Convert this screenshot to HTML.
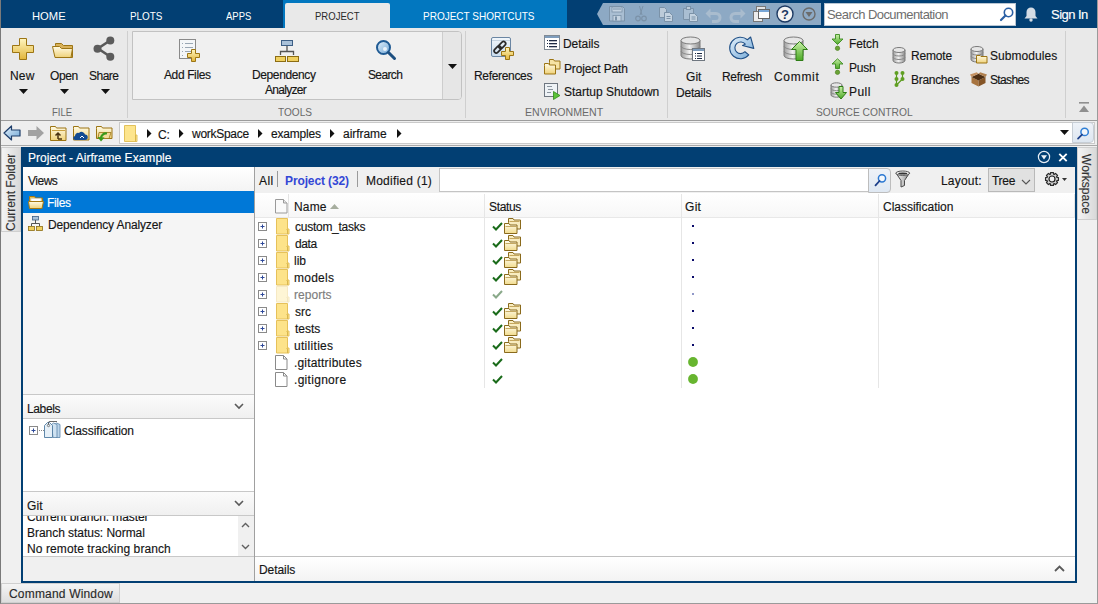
<!DOCTYPE html>
<html><head><meta charset="utf-8">
<style>
*{box-sizing:border-box;margin:0;padding:0}
html,body{width:1098px;height:604px;overflow:hidden;background:#f0f0f0;font-family:"Liberation Sans",sans-serif;font-size:12px;color:#222}
.a{position:absolute}
.t{position:absolute;white-space:nowrap;line-height:14px;-webkit-text-stroke:0.15px currentColor}
svg{position:absolute;overflow:visible}
</style></head><body>
<!-- outer frame -->
<div class="a" style="left:0;top:0;width:1098px;height:604px;border-left:1px solid #7a7a7a;border-right:1px solid #9a9a9a;border-bottom:1px solid #9a9a9a;z-index:50;pointer-events:none"></div>

<!-- ===== TOP BAR ===== -->
<div class="a" style="left:0;top:0;width:1098px;height:28px;background:#023f73"></div>
<div class="a" style="left:283px;top:0;width:284px;height:28px;background:#0277bf"></div>
<div class="a" style="left:285px;top:3px;width:105px;height:26px;background:#e9e9e9;border-radius:2px 2px 0 0"></div>

<!-- quick access -->
<svg style="left:596px;top:3px" width="226" height="22"><path d="M7 0H225V22H7L1 11Z" fill="#8da9c4"/></svg>

<!-- search doc -->
<div class="a" style="left:824px;top:3px;width:192px;height:23px;background:#fff;border:1px solid #b9c6d3"></div>

<!-- ===== TOOLSTRIP ===== -->
<div class="a" style="left:0;top:28px;width:1098px;height:92px;background:#e9e9e9"></div>
<div class="a" style="left:0;top:120px;width:1098px;height:1px;background:#9c9c9c"></div>
<!-- separators -->
<div class="a" style="left:127px;top:31px;width:1px;height:87px;background:#cfcfcf"></div>
<div class="a" style="left:465px;top:31px;width:1px;height:87px;background:#cfcfcf"></div>
<div class="a" style="left:667px;top:31px;width:1px;height:87px;background:#cfcfcf"></div>
<div class="a" style="left:1065px;top:31px;width:1px;height:87px;background:#cfcfcf"></div>
<!-- tools box -->
<div class="a" style="left:132px;top:31px;width:330px;height:69px;background:#f0f0f0;border:1px solid #c2c2c2;border-radius:0 4px 4px 0"></div>
<div class="a" style="left:442px;top:32px;width:19px;height:67px;background:#e6e6e6;border-left:1px solid #cdcdcd;border-radius:0 3px 3px 0"></div>

<!-- labels -->

<!-- shared defs -->
<svg width="0" height="0" style="position:absolute">
<defs>
<linearGradient id="gold" x1="0" y1="0" x2="0" y2="1"><stop offset="0" stop-color="#fff6c0"/><stop offset="1" stop-color="#e2b53a"/></linearGradient>
<linearGradient id="fold" x1="0" y1="0" x2="0" y2="1"><stop offset="0" stop-color="#fffbe6"/><stop offset="1" stop-color="#efd27a"/></linearGradient>
<linearGradient id="db" x1="0" y1="0" x2="1" y2="0"><stop offset="0" stop-color="#9c9c9c"/><stop offset=".45" stop-color="#f2f2f2"/><stop offset="1" stop-color="#8a8a8a"/></linearGradient>
<linearGradient id="fold2" x1="0" y1="0" x2="0" y2="1"><stop offset="0" stop-color="#fffdf0"/><stop offset="1" stop-color="#f2dc8e"/></linearGradient>
<linearGradient id="grn" x1="0" y1="0" x2="0" y2="1"><stop offset="0" stop-color="#c9f0a8"/><stop offset="1" stop-color="#4aa824"/></linearGradient>
<linearGradient id="blu2" x1="0" y1="0" x2="0" y2="1"><stop offset="0" stop-color="#f2f7fb"/><stop offset="1" stop-color="#c9dced"/></linearGradient>
<linearGradient id="blu" x1="0" y1="0" x2="1" y2="1"><stop offset="0" stop-color="#e6f2fb"/><stop offset="1" stop-color="#6fa6d6"/></linearGradient>
</defs></svg>

<!-- New -->
<svg style="left:12px;top:38px" width="22" height="22"><path d="M7.5 .5h7v7h7v7h-7v7h-7v-7h-7v-7h7z" fill="url(#gold)" stroke="#9c7514"/></svg>
<!-- Open -->
<svg style="left:52px;top:42px" width="23" height="17"><path d="M3.5 3.5V1.5h6l2 2h9v12h-17z" fill="#d9b25a" stroke="#9c7514"/><path d="M.5 4.5h7l2 2h11l-1.5 9h-16z" fill="url(#fold)" stroke="#9c7514"/></svg>
<!-- Share -->
<svg style="left:93px;top:36px" width="22" height="26"><path d="M17 4.5L5 12.5L17 20.5" fill="none" stroke="#5a5a5a" stroke-width="2.6"/><circle cx="17.3" cy="4.5" r="4" fill="#5c5c5c"/><circle cx="4.5" cy="12.8" r="4" fill="#5c5c5c"/><circle cx="17.3" cy="20.8" r="4" fill="#5c5c5c"/></svg>
<!-- dropdown triangles -->
<svg style="left:19px;top:89px" width="9" height="5"><path d="M0 0h9L4.5 5z" fill="#111"/></svg>
<svg style="left:60px;top:89px" width="9" height="5"><path d="M0 0h9L4.5 5z" fill="#111"/></svg>
<svg style="left:101px;top:89px" width="9" height="5"><path d="M0 0h9L4.5 5z" fill="#111"/></svg>
<svg style="left:448px;top:64px" width="9" height="5"><path d="M0 0h9L4.5 5z" fill="#111"/></svg>

<!-- Add Files -->
<svg style="left:179px;top:39px" width="22" height="23"><rect x=".5" y=".5" width="16" height="19" fill="#f4f6f8" stroke="#8a8a8a"/><g fill="#9aa7b4"><rect x="3" y="4" width="1" height="1"/><rect x="3" y="8" width="1" height="1"/><rect x="3" y="12" width="1" height="1"/><rect x="3" y="16" width="1" height="1"/><rect x="6" y="4" width="8" height="1"/><rect x="6" y="8" width="8" height="1"/><rect x="6" y="12" width="8" height="1"/></g><path d="M12.5 10.5h4v4h4v4h-4v4h-4v-4h-4v-4h4z" fill="url(#gold)" stroke="#9c7514"/></svg>
<!-- Dependency Analyzer -->
<svg style="left:275px;top:40px" width="24" height="22"><rect x="6.5" y=".5" width="11" height="5" fill="#a9c1d9" stroke="#3d5f86"/><path d="M12 6v5M5.5 15v-3.5h13V15" fill="none" stroke="#555" stroke-width="1.3"/><rect x=".5" y="16.5" width="10" height="5" fill="#f0d060" stroke="#8c6d14"/><rect x="12.5" y="16.5" width="11" height="5" fill="#f0d060" stroke="#8c6d14"/></svg>
<!-- Search -->
<svg style="left:375px;top:39px" width="22" height="22"><circle cx="8.5" cy="8.5" r="6.5" fill="url(#blu)" stroke="#1f5a93" stroke-width="2"/><path d="M13.5 13.5L19.5 19.5" stroke="#1d4f80" stroke-width="3" stroke-linecap="round"/><circle cx="10" cy="10" r="2" fill="#fff" opacity=".8"/></svg>

<!-- References -->
<svg style="left:490px;top:36px" width="26" height="26"><rect x="1.5" y="1.5" width="19" height="19" rx="1.5" fill="url(#blu2)" stroke="#6b86a3"/><path d="M2 4.5h18" stroke="#c5d3e0"/><g transform="rotate(-45 10 11)" fill="none" stroke="#2a2a2a" stroke-width="1.7"><rect x="2.5" y="9" width="8" height="4.2" rx="2.1"/><rect x="9" y="9" width="8" height="4.2" rx="2.1"/></g><path d="M15.5 11.5h4v4h4v4h-4v4h-4v-4h-4v-4h4z" fill="url(#gold)" stroke="#9c7514"/></svg>
<!-- Details small -->
<svg style="left:544px;top:35px" width="16" height="15"><rect x=".5" y=".5" width="15" height="14" fill="#fff" stroke="#808a94"/><rect x="1" y="1" width="14" height="2" fill="#7d9cbc"/><g fill="#1d2a44"><rect x="3" y="5" width="1" height="1"/><rect x="3" y="8" width="1" height="1"/><rect x="3" y="11" width="1" height="1"/><rect x="5" y="5" width="8" height="1.3"/><rect x="5" y="8" width="8" height="1.3"/><rect x="5" y="11" width="8" height="1.3"/></g></svg>
<!-- Project Path -->
<svg style="left:544px;top:59px" width="17" height="16"><path d="M5.5 3.5v-3h4l1 1.5h5.5v8h-10.5z" fill="#f6e3a4" stroke="#9c7514"/><path d="M.5 6.5v-2h4l1 1.5h6v9h-11z" fill="url(#fold)" stroke="#9c7514"/></svg>
<!-- Startup Shutdown -->
<svg style="left:544px;top:83px" width="17" height="17"><rect x=".5" y=".5" width="13" height="13" fill="#eef2f6" stroke="#6e7680"/><g stroke="#8a949e"><path d="M3 3.5h5M4 6.5h5M3 9.5h4"/></g><path d="M9.5 8.5v8l6.5-4z" fill="#5cc23a" stroke="#2e8c18" stroke-width=".8"/></svg>

<!-- Git Details -->
<svg style="left:680px;top:36px" width="27" height="26"><path d="M1 4.5v15a9.5 3.5 0 0 0 19 0v-15" fill="url(#db)" stroke="#7a7a7a"/><ellipse cx="10.5" cy="4.5" rx="9.5" ry="3.5" fill="#e6e6e6" stroke="#7a7a7a"/><path d="M1 10a9.5 3.5 0 0 0 19 0M1 15a9.5 3.5 0 0 0 19 0" fill="none" stroke="#888"/><rect x="12.5" y="12.5" width="12" height="12" fill="#fff" stroke="#6f7780"/><rect x="13" y="13" width="11" height="2" fill="#7d9cbc"/><g fill="#1d2a44"><rect x="15" y="17" width="1" height="1"/><rect x="15" y="19.5" width="1" height="1"/><rect x="15" y="22" width="1" height="1"/><rect x="17" y="17" width="5" height="1"/><rect x="17" y="19.5" width="5" height="1"/><rect x="17" y="22" width="5" height="1"/></g></svg>
<!-- Refresh -->
<svg style="left:728px;top:35px" width="28" height="26"><path d="M20.77 19.94A10.8 10.8 0 1 1 19.44 4.73L22.6 2 25.8 13.4 14.5 10.5 17.25 9.2A5.8 5.8 0 1 0 16.94 16.73z" fill="url(#blu)" stroke="#1f4f86" stroke-width="1.1" stroke-linejoin="round"/></svg>
<!-- Commit -->
<svg style="left:783px;top:36px" width="26" height="26"><path d="M1 4.5v15a9.5 3.5 0 0 0 19 0v-15" fill="url(#db)" stroke="#7a7a7a"/><ellipse cx="10.5" cy="4.5" rx="9.5" ry="3.5" fill="#e6e6e6" stroke="#7a7a7a"/><path d="M1 10a9.5 3.5 0 0 0 19 0M1 15a9.5 3.5 0 0 0 19 0" fill="none" stroke="#888"/><path d="M16.5 5.5l8 8h-4.5v11h-7v-11h-4.5z" fill="url(#grn)" stroke="#2e7d16"/></svg>
<!-- Fetch -->
<svg style="left:831px;top:34px" width="13" height="18"><path d="M4.5 .5h4v4.5h3.5L6.5 10.5 1 5h3.5z" fill="url(#grn)" stroke="#3b8a1e" stroke-width=".9"/><circle cx="6.5" cy="14.3" r="2.2" fill="#6aa336" stroke="#4a7d1c" stroke-width=".6"/></svg>
<!-- Push -->
<svg style="left:831px;top:58px" width="13" height="18"><path d="M4.5 10.5h4V6h3.5L6.5 .8 1 6h3.5z" fill="url(#grn)" stroke="#3b8a1e" stroke-width=".9"/><circle cx="6.5" cy="14.3" r="2.2" fill="#6aa336" stroke="#4a7d1c" stroke-width=".6"/></svg>
<!-- Pull -->
<svg style="left:830px;top:82px" width="18" height="18"><path d="M1 3v10a5.5 2.2 0 0 0 11 0v-10" fill="url(#db)" stroke="#7a7a7a"/><ellipse cx="6.5" cy="3" rx="5.5" ry="2.2" fill="#e6e6e6" stroke="#7a7a7a"/><path d="M1 6.5a5.5 2.2 0 0 0 11 0M1 10a5.5 2.2 0 0 0 11 0" fill="none" stroke="#888"/><path d="M9 4.5h4v6h3.5l-5.5 6.5-5.5-6.5H9z" fill="url(#grn)" stroke="#2e7d16"/></svg>
<!-- Remote -->
<svg style="left:892px;top:47px" width="14" height="17"><path d="M1 3v10.5a6 2.5 0 0 0 12 0V3" fill="url(#db)" stroke="#7a7a7a"/><ellipse cx="7" cy="3" rx="6" ry="2.5" fill="#e6e6e6" stroke="#7a7a7a"/><path d="M1 6.5a6 2.5 0 0 0 12 0M1 10a6 2.5 0 0 0 12 0" fill="none" stroke="#888"/></svg>
<!-- Branches -->
<svg style="left:893px;top:70px" width="13" height="18"><path d="M3.5 3v12.5M9.5 3v6L3.5 15" fill="none" stroke="#5a9a1e" stroke-width="1.2"/><g fill="#5f9f22"><circle cx="3.5" cy="3" r="2"/><circle cx="9.5" cy="3" r="2"/><circle cx="3.5" cy="9" r="2"/><circle cx="9.5" cy="9" r="2"/><circle cx="3.5" cy="15" r="2"/></g></svg>
<!-- Submodules -->
<svg style="left:970px;top:46px" width="18" height="18"><path d="M1 3v10.5a6 2.5 0 0 0 12 0V3" fill="url(#db)" stroke="#7a7a7a"/><ellipse cx="7" cy="3" rx="6" ry="2.5" fill="#e6e6e6" stroke="#7a7a7a"/><path d="M1 6.5a6 2.5 0 0 0 12 0M1 10a6 2.5 0 0 0 12 0" fill="none" stroke="#888"/><path d="M6.5 9.5h3.5l1 1h6v6.5h-10.5z" fill="url(#fold)" stroke="#9c7514"/></svg>
<!-- Stashes -->
<svg style="left:970px;top:72px" width="18" height="15"><path d="M1.5 5L8.5 8.5V14.5L1.5 11z" fill="#a8743f"/><path d="M8.5 8.5L15.5 5V11L8.5 14.5z" fill="#855526"/><path d="M8.5 1.8L15.5 5 8.5 8.5 1.5 5z" fill="#4d2e12"/><path d="M1.5 5L0 2.6 6.8 .2 8.5 1.8z" fill="#c49262"/><path d="M15.5 5L17 2.6 10.2 .2 8.5 1.8z" fill="#b0804e"/></svg>
<!-- collapse toolstrip -->
<svg style="left:1079px;top:102px" width="11" height="11"><rect x="0" y="0" width="10" height="1.6" fill="#8f8f8f"/><path d="M5 3.5L10 10H0z" fill="#8f8f8f"/></svg>

<!-- ===== ADDRESS BAR ===== -->
<div class="a" style="left:0;top:121px;width:1098px;height:24px;background:#eeeeee"></div>
<div class="a" style="left:0;top:145px;width:1098px;height:1px;background:#a9a9a9"></div>
<div class="a" style="left:119px;top:122px;width:976px;height:22px;background:#fff;border:1px solid #cacaca"></div>

<!-- quick access icons -->
<svg style="left:609px;top:6px" width="17" height="16"><path d="M.5 .5h13l2 2v12.5h-15z" fill="#a9bed2" stroke="#7b92a8"/><rect x="3" y="1" width="10" height="5" fill="#c4d3e1" stroke="#7b92a8" stroke-width=".8"/><path d="M4 3h8" stroke="#7b92a8"/><rect x="4" y="9.5" width="8" height="5.5" fill="#c4d3e1" stroke="#7b92a8" stroke-width=".8"/><rect x="6" y="10.5" width="2" height="4" fill="#7b92a8"/></svg>
<svg style="left:635px;top:6px" width="12" height="16"><path d="M4.5 0L7 9M8 0L5 9" stroke="#7b92a8" stroke-width="1"/><circle cx="3" cy="12.5" r="2.3" fill="none" stroke="#7b92a8" stroke-width="1.2"/><circle cx="9" cy="12.5" r="2.3" fill="none" stroke="#7b92a8" stroke-width="1.2"/></svg>
<svg style="left:659px;top:7px" width="14" height="15"><path d="M.5 .5h5l2 2v8h-7z" fill="#bccbd9" stroke="#7b92a8"/><path d="M5.5 5.5h5l3 3v6h-8z" fill="#c4d3e1" stroke="#7b92a8"/><path d="M7.5 9.5h4M7.5 11.5h4" stroke="#7b92a8"/></svg>
<svg style="left:683px;top:6px" width="15" height="16"><path d="M.5 2.5h10v11h-10z" fill="#a9bed2" stroke="#7b92a8"/><rect x="3.5" y=".5" width="4" height="3" fill="#bccbd9" stroke="#7b92a8"/><path d="M6.5 7.5h5l3 3v5h-8z" fill="#c4d3e1" stroke="#7b92a8"/><path d="M8.5 11h4M8.5 13h4" stroke="#7b92a8"/></svg>
<svg style="left:705px;top:8px" width="17" height="14"><path d="M2 5.5h9a4 4 0 0 1 0 8H7" fill="none" stroke="#a9bcce" stroke-width="3"/><path d="M.5 5.5L5.5 .5v10z" fill="#a9bcce"/><path d="M2 5.5h9a4 4 0 0 1 0 8H7" fill="none" stroke="#8aa0b6" stroke-width=".6" opacity=".0"/></svg>
<svg style="left:729px;top:8px" width="17" height="14"><path d="M15 5.5H6a4 4 0 0 0 0 8h4" fill="none" stroke="#a9bcce" stroke-width="3"/><path d="M16.5 5.5L11.5 .5v10z" fill="#a9bcce"/></svg>
<svg style="left:753px;top:6px" width="17" height="16"><rect x="3.5" y=".5" width="9" height="10" fill="#e3e3e3" stroke="#777"/><rect x=".5" y="5.5" width="9" height="10" fill="#ececec" stroke="#777"/><rect x="5.5" y="3.5" width="11" height="9" fill="#fdfdfd" stroke="#666"/><rect x="6" y="4" width="10" height="2" fill="#7aa7d6"/></svg>
<svg style="left:776px;top:5px" width="18" height="18"><circle cx="9" cy="9" r="8" fill="#f4f4f4" stroke="#1d3a63" stroke-width="1.4"/><text x="9" y="13.8" text-anchor="middle" font-family="Liberation Sans" font-weight="bold" font-size="13" fill="#1d3a63">?</text></svg>
<svg style="left:802px;top:7px" width="14" height="14"><circle cx="7" cy="7" r="6" fill="none" stroke="#6b6b6b" stroke-width="1.4"/><path d="M3.5 5h7L7 10z" fill="#6b6b6b"/></svg>
<!-- doc search mag -->
<svg style="left:1000px;top:7px" width="14" height="14"><circle cx="8.5" cy="5.5" r="4.2" fill="none" stroke="#2a5fa4" stroke-width="1.6"/><path d="M5.5 8.5L1 13" stroke="#2a5fa4" stroke-width="2.2" stroke-linecap="round"/></svg>
<!-- bell -->
<svg style="left:1024px;top:6px" width="14" height="16"><path d="M7 1.5a4.5 4.5 0 0 0-4.5 4.5v4L.5 12.5h13l-2-2.5v-4A4.5 4.5 0 0 0 7 1.5z" fill="#d4dce5"/><circle cx="7" cy="14" r="1.7" fill="#d4dce5"/></svg>

<!-- address bar icons -->
<svg style="left:3px;top:125px" width="18" height="16"><path d="M1 8L8.5 1v4h8.5v6H8.5v4z" fill="url(#blu)" stroke="#1f3e6b" stroke-width="1.2" stroke-linejoin="round"/></svg>
<svg style="left:27px;top:125px" width="18" height="16"><path d="M17 8L9.5 1v4H1v6h8.5v4z" fill="#a2a2a2"/></svg>
<svg style="left:50px;top:126px" width="17" height="15"><path d="M.5 2.5v-2h5l1 1.5h9.5v12.5h-15.5z" fill="url(#fold)" stroke="#9c7514"/><path d="M2 4.5h13" stroke="#c9a040"/><path d="M8 13V7M5.5 9.5L8 7l2.5 2.5M8 13h4" fill="none" stroke="#4a3310" stroke-width="1.5"/></svg>
<svg style="left:73px;top:126px" width="17" height="16"><path d="M.5 2.5v-2h5l1 1.5h9.5v12h-15.5z" fill="url(#fold)" stroke="#9c7514"/><path d="M2 10a3 3 0 0 1 4-3a3.5 3.5 0 0 1 6 1.5a2.5 2.5 0 0 1 0 5.5H2.5a2 2 0 0 1-.5-4z" fill="#114a92"/><path d="M7 12l2-2 2 2" stroke="#fff" stroke-width="1" fill="none"/></svg>
<svg style="left:96px;top:126px" width="17" height="16"><path d="M.5 2.5v-2h5l1 1.5h9.5v10.5h-15.5z" fill="url(#fold)" stroke="#9c7514"/><path d="M3 6.5l12 0l-2 6h-11z" fill="#f3dc9a" stroke="#9c7514" stroke-width=".8"/><path d="M11 7.5a5 5 0 0 0-6 5" fill="none" stroke="#3a9a1a" stroke-width="2.2"/><path d="M1.5 11l3.5 4.5 3.5-4z" fill="#3a9a1a"/></svg>
<!-- address separator -->

<!-- breadcrumb folder -->
<svg style="left:124px;top:125px" width="14" height="17"><path d="M.5 .5h11v9.5h1.5v6.5H.5z" fill="#fde58d" stroke="#e2c15a"/><path d="M11.5 10v6.5" stroke="#d9b64c"/></svg>
<svg style="left:147px;top:129px" width="5" height="9"><path d="M0 0L4.5 4.5L0 9z" fill="#111"/></svg>
<svg style="left:179px;top:129px" width="5" height="9"><path d="M0 0L4.5 4.5L0 9z" fill="#111"/></svg>
<svg style="left:258px;top:129px" width="5" height="9"><path d="M0 0L4.5 4.5L0 9z" fill="#111"/></svg>
<svg style="left:330px;top:129px" width="5" height="9"><path d="M0 0L4.5 4.5L0 9z" fill="#111"/></svg>
<svg style="left:397px;top:129px" width="5" height="9"><path d="M0 0L4.5 4.5L0 9z" fill="#111"/></svg>
<svg style="left:1060px;top:130px" width="9" height="5"><path d="M0 0h9L4.5 5z" fill="#111"/></svg>
<div class="a" style="left:1072px;top:122px;width:22px;height:21px;background:linear-gradient(#eef2f8,#dde6f0);border:1px solid #c6cdd5;border-radius:0 4px 4px 0"></div>
<svg style="left:1076px;top:126px" width="14" height="14"><circle cx="8.6" cy="5.9" r="3.7" fill="#f2f6fb" stroke="#2f7fd6" stroke-width="1.5"/><path d="M6 8.6L2 12.6" stroke="#1d3f8a" stroke-width="1.7" stroke-linecap="round"/></svg>

<!-- ===== MAIN ===== -->
<!-- current folder tab -->
<div class="a" style="left:1px;top:147px;width:20px;height:85px;background:linear-gradient(90deg,#f4f4f4,#d9d9d9);border:1px solid #cfcfcf"></div>
<!-- workspace tab -->
<div class="a" style="left:1077px;top:147px;width:20px;height:73px;background:linear-gradient(90deg,#f4f4f4,#d9d9d9);border:1px solid #cfcfcf"></div>
<!-- command window tab -->
<div class="a" style="left:1px;top:583px;width:119px;height:20px;background:linear-gradient(#f4f4f4,#dedede);border:1px solid #cfcfcf"></div>

<!-- project panel -->
<div class="a" style="left:21px;top:147px;width:1056px;height:436px;background:#fff;border:2px solid #023f73"></div>
<div class="a" style="left:21px;top:147px;width:1056px;height:20px;background:#023f73"></div>

<!-- left column -->
<div class="a" style="left:23px;top:167px;width:231px;height:414px;background:#f5f5f5"></div>
<div class="a" style="left:254px;top:167px;width:1px;height:414px;background:#a0a0a0"></div>
<div class="a" style="left:23px;top:167px;width:231px;height:24px;background:linear-gradient(#ffffff,#f4f4f4)"></div>
<div class="a" style="left:23px;top:191px;width:231px;height:22px;background:#0078d7"></div>

<div class="a" style="left:23px;top:394px;width:231px;height:1px;background:#c8c8c8"></div>
<div class="a" style="left:23px;top:395px;width:231px;height:23px;background:linear-gradient(#fbfbfb,#f0f0f0)"></div>
<div class="a" style="left:23px;top:418px;width:231px;height:1px;background:#c8c8c8"></div>
<div class="a" style="left:23px;top:419px;width:231px;height:72px;background:#fff"></div>

<div class="a" style="left:23px;top:491px;width:231px;height:1px;background:#c8c8c8"></div>
<div class="a" style="left:23px;top:492px;width:231px;height:23px;background:linear-gradient(#fbfbfb,#f0f0f0)"></div>
<div class="a" style="left:23px;top:515px;width:231px;height:1px;background:#c8c8c8"></div>
<div class="a" style="left:23px;top:516px;width:231px;height:40px;background:#fff;overflow:hidden">
  <div class="a" style="left:215px;top:0;width:16px;height:40px;background:#f0f0f0"></div>
</div>
<div class="a" style="left:23px;top:556px;width:231px;height:1px;background:#c8c8c8"></div>
<div class="a" style="left:23px;top:557px;width:231px;height:24px;background:#f0f0f0"></div>

<!-- right column -->
<div class="a" style="left:255px;top:167px;width:820px;height:26px;background:#f0f0f0"></div>
<div class="a" style="left:439px;top:168px;width:430px;height:24px;background:#fff;border:1px solid #c4c4c4"></div>
<div class="a" style="left:988px;top:168px;width:47px;height:24px;background:#e1e1e1;border:1px solid #b9b9b9"></div>

<!-- table header -->
<div class="a" style="left:255px;top:193px;width:820px;height:25px;background:linear-gradient(#ffffff,#f7f7f7);border-bottom:1px solid #e8e8e8"></div>


<!-- vertical tab texts -->
<div class="t" style="left:-26px;top:187px;width:74px;transform:rotate(-90deg);color:#333;text-align:center">Current Folder</div>
<div class="t" style="left:1056px;top:177px;width:60px;transform:rotate(90deg);color:#333;text-align:center">Workspace</div>
<!-- title bar icons -->
<svg style="left:1037px;top:150px" width="14" height="14"><circle cx="7" cy="7" r="5.6" fill="none" stroke="#e8eef5" stroke-width="1.2"/><path d="M4 5.3h6L7 9.5z" fill="#f0f4f8"/></svg>
<svg style="left:1058px;top:153px" width="10" height="9"><path d="M1.3 .8l7.4 7.4M8.7 .8l-7.4 7.4" stroke="#fff" stroke-width="1.9"/></svg>

<!-- views icons -->
<svg style="left:28px;top:195px" width="17" height="14"><path d="M1.5 4.5v-3h5l1 1.5h7v9h-13z" fill="#e7c35a" stroke="#a77a12"/><path d="M3 3.5h10v4H3z" fill="#fff" stroke="#ccc" stroke-width=".6"/><path d="M.5 6.5h15l-1.5 7h-12.5z" fill="url(#fold)" stroke="#a77a12"/></svg>
<svg style="left:28px;top:216px" width="15" height="15"><rect x="4.5" y=".5" width="6" height="3.5" fill="#a9c1d9" stroke="#3d5f86" stroke-width=".8"/><path d="M7.5 4v3.5M3.5 10V7.5h8V10" fill="none" stroke="#555" stroke-width="1"/><rect x=".5" y="10.5" width="6" height="4" fill="#f0d060" stroke="#8c6d14" stroke-width=".8"/><rect x="8.5" y="10.5" width="6" height="4" fill="#f0d060" stroke="#8c6d14" stroke-width=".8"/></svg>

<!-- chevrons -->
<svg style="left:234px;top:403px" width="10" height="7"><path d="M1 1l4 4 4-4" fill="none" stroke="#5a5a5a" stroke-width="1.6"/></svg>
<svg style="left:234px;top:500px" width="10" height="7"><path d="M1 1l4 4 4-4" fill="none" stroke="#5a5a5a" stroke-width="1.6"/></svg>
<svg style="left:241px;top:522px" width="9" height="6"><path d="M1 5l3.5-3.5L8 5" fill="none" stroke="#606060" stroke-width="1.4"/></svg>
<svg style="left:241px;top:544px" width="9" height="6"><path d="M1 1l3.5 3.5L8 1" fill="none" stroke="#606060" stroke-width="1.4"/></svg>

<!-- labels tree -->
<svg style="left:29px;top:426px" width="32" height="13"><rect x=".5" y=".5" width="8" height="8" fill="#fff" stroke="#8a8a8a"/><path d="M2.5 4.5h4M4.5 2.5v4" stroke="#2f4a9a"/><path d="M10 4.5h1M12 4.5h1M14 4.5h1" stroke="#888"/></svg>
<svg style="left:44px;top:421px" width="17" height="17"><path d="M10.5 3.5l2-1.5 3.5 1.5v13h-4z" fill="#bcd5ea" stroke="#5a84a8" stroke-width=".8"/><path d="M7.5 3.5l2-1.5 3.5 1.5v13h-4z" fill="#cfe2f1" stroke="#5a84a8" stroke-width=".8"/><path d="M.5 16.5v-12l3-3h2l3 3v12z" fill="#e6f0f8" stroke="#4f7aa0" stroke-width=".9"/><circle cx="4.5" cy="4.5" r="1.2" fill="none" stroke="#555" stroke-width=".7"/><path d="M4.5 3.5V1.5q0-1 1.5-1h7" fill="none" stroke="#444" stroke-width=".8"/></svg>

<!-- right tab bar separators -->
<div class="a" style="left:277px;top:171px;width:1px;height:16px;background:#9a9a9a"></div>
<div class="a" style="left:357px;top:171px;width:1px;height:16px;background:#9a9a9a"></div>
<div class="a" style="left:868px;top:168px;width:23px;height:25px;background:linear-gradient(#eef2f8,#dfe8f2);border:1px solid #bdbdbd;border-radius:0 4px 4px 0"></div>
<svg style="left:874px;top:173px" width="14" height="14"><circle cx="8" cy="5.3" r="3.6" fill="#f4f8fc" stroke="#2a78d2" stroke-width="1.5"/><path d="M5.5 8L1.5 12.3" stroke="#1d3f8a" stroke-width="1.8" stroke-linecap="round"/></svg>
<svg style="left:895px;top:170px" width="16" height="18"><defs><linearGradient id="fun" x1="0" x2="1"><stop offset="0" stop-color="#fafafa"/><stop offset=".6" stop-color="#bdbdbd"/><stop offset="1" stop-color="#777"/></linearGradient></defs><path d="M1 3L6 10.5V17L9.5 15.5V10.5L14.5 3z" fill="url(#fun)" stroke="#4a4a4a" stroke-width="1"/><ellipse cx="7.75" cy="3.2" rx="6.9" ry="2.2" fill="#eee" stroke="#555" stroke-width="1"/><ellipse cx="7.75" cy="3.5" rx="4.5" ry="1" fill="#333"/></svg>
<svg style="left:1021px;top:179px" width="10" height="6"><path d="M1 1l4 4 4-4" fill="none" stroke="#555" stroke-width="1.1"/></svg>
<svg style="left:1044px;top:171px" width="24" height="16"><path d="M12.69 6.28 L14.44 6.56 L14.44 9.44 L12.69 9.72 L12.54 10.10 L13.57 11.54 L11.54 13.57 L10.10 12.54 L9.72 12.69 L9.44 14.44 L6.56 14.44 L6.28 12.69 L5.90 12.54 L4.46 13.57 L2.43 11.54 L3.46 10.10 L3.31 9.72 L1.56 9.44 L1.56 6.56 L3.31 6.28 L3.46 5.90 L2.43 4.46 L4.46 2.43 L5.90 3.46 L6.28 3.31 L6.56 1.56 L9.44 1.56 L9.72 3.31 L10.10 3.46 L11.54 2.43 L13.57 4.46 L12.54 5.90Z" fill="#cfcfcf" stroke="#2a2a2a" stroke-width="1.2" stroke-linejoin="round"/><circle cx="8" cy="8" r="3" fill="#f2f2f2" stroke="#222" stroke-width="1.2"/><path d="M18 7h5l-2.5 3z" fill="#333"/></svg>

<!-- table header icons -->
<div class="a" style="left:288px;top:194px;width:1px;height:23px;background:#e3e3e3"></div>
<svg style="left:275px;top:199px" width="13" height="15"><path d="M.5 .5h8l3.5 3.5v10H.5z" fill="#fafafa" stroke="#9a9a9a"/><path d="M8.5 .5v3.5h3.5" fill="#e6e6e6" stroke="#9a9a9a"/></svg>
<svg style="left:330px;top:204px" width="10" height="5"><path d="M0 5L4.5 0L9 5z" fill="#a7ae9f"/></svg>
<div class="a" style="left:484px;top:194px;width:1px;height:194px;background:#e6e6e6"></div>
<div class="a" style="left:681px;top:194px;width:1px;height:194px;background:#e6e6e6"></div>
<div class="a" style="left:878px;top:194px;width:1px;height:194px;background:#e6e6e6"></div>
<div class="a" style="left:1074px;top:194px;width:1px;height:23px;background:#e6e6e6"></div>

<svg style="left:258px;top:222px" width="10" height="10"><rect x=".5" y=".5" width="8" height="8" fill="#fff" stroke="#8a8a8a"/><path d="M2.5 4.5h4M4.5 2.5v4" stroke="#2f4a9a"/></svg>
<svg style="left:276px;top:218px" width="14" height="17"><path d="M.5 .5h11v10.5h1.5v5H.5z" fill="#fde38a" stroke="#e6c15a"/><path d="M10.5 11.5h1v4.5" stroke="#d8b64e" fill="none"/></svg>
<svg style="left:492px;top:222px" width="11" height="9"><path d="M1 4.5l3 3L10 1" fill="none" stroke="#1a6b1a" stroke-width="2"/></svg>
<svg style="left:504px;top:218px" width="18" height="16"><path d="M4.5 4.5V.5h4.5l1 1.5h6.5v9h-12z" fill="#f8ecc0" stroke="#8a6a1c"/><path d="M5.5 3.5h10" stroke="#b89545" stroke-width=".8"/><path d="M.5 15.5V5.5h4.5l1 1.5h7v8.5z" fill="url(#fold2)" stroke="#8a6a1c"/><path d="M1.5 8.5h11" stroke="#b89545" stroke-width=".8"/></svg>
<div class="a" style="left:692px;top:225px;width:2px;height:2px;background:#0a0a6a"></div>
<svg style="left:258px;top:239px" width="10" height="10"><rect x=".5" y=".5" width="8" height="8" fill="#fff" stroke="#8a8a8a"/><path d="M2.5 4.5h4M4.5 2.5v4" stroke="#2f4a9a"/></svg>
<svg style="left:276px;top:235px" width="14" height="17"><path d="M.5 .5h11v10.5h1.5v5H.5z" fill="#fde38a" stroke="#e6c15a"/><path d="M10.5 11.5h1v4.5" stroke="#d8b64e" fill="none"/></svg>
<svg style="left:492px;top:239px" width="11" height="9"><path d="M1 4.5l3 3L10 1" fill="none" stroke="#1a6b1a" stroke-width="2"/></svg>
<svg style="left:504px;top:235px" width="18" height="16"><path d="M4.5 4.5V.5h4.5l1 1.5h6.5v9h-12z" fill="#f8ecc0" stroke="#8a6a1c"/><path d="M5.5 3.5h10" stroke="#b89545" stroke-width=".8"/><path d="M.5 15.5V5.5h4.5l1 1.5h7v8.5z" fill="url(#fold2)" stroke="#8a6a1c"/><path d="M1.5 8.5h11" stroke="#b89545" stroke-width=".8"/></svg>
<div class="a" style="left:692px;top:242px;width:2px;height:2px;background:#0a0a6a"></div>
<svg style="left:258px;top:256px" width="10" height="10"><rect x=".5" y=".5" width="8" height="8" fill="#fff" stroke="#8a8a8a"/><path d="M2.5 4.5h4M4.5 2.5v4" stroke="#2f4a9a"/></svg>
<svg style="left:276px;top:252px" width="14" height="17"><path d="M.5 .5h11v10.5h1.5v5H.5z" fill="#fde38a" stroke="#e6c15a"/><path d="M10.5 11.5h1v4.5" stroke="#d8b64e" fill="none"/></svg>
<svg style="left:492px;top:256px" width="11" height="9"><path d="M1 4.5l3 3L10 1" fill="none" stroke="#1a6b1a" stroke-width="2"/></svg>
<svg style="left:504px;top:252px" width="18" height="16"><path d="M4.5 4.5V.5h4.5l1 1.5h6.5v9h-12z" fill="#f8ecc0" stroke="#8a6a1c"/><path d="M5.5 3.5h10" stroke="#b89545" stroke-width=".8"/><path d="M.5 15.5V5.5h4.5l1 1.5h7v8.5z" fill="url(#fold2)" stroke="#8a6a1c"/><path d="M1.5 8.5h11" stroke="#b89545" stroke-width=".8"/></svg>
<div class="a" style="left:692px;top:259px;width:2px;height:2px;background:#0a0a6a"></div>
<svg style="left:258px;top:273px" width="10" height="10"><rect x=".5" y=".5" width="8" height="8" fill="#fff" stroke="#8a8a8a"/><path d="M2.5 4.5h4M4.5 2.5v4" stroke="#2f4a9a"/></svg>
<svg style="left:276px;top:269px" width="14" height="17"><path d="M.5 .5h11v10.5h1.5v5H.5z" fill="#fde38a" stroke="#e6c15a"/><path d="M10.5 11.5h1v4.5" stroke="#d8b64e" fill="none"/></svg>
<svg style="left:492px;top:273px" width="11" height="9"><path d="M1 4.5l3 3L10 1" fill="none" stroke="#1a6b1a" stroke-width="2"/></svg>
<svg style="left:504px;top:269px" width="18" height="16"><path d="M4.5 4.5V.5h4.5l1 1.5h6.5v9h-12z" fill="#f8ecc0" stroke="#8a6a1c"/><path d="M5.5 3.5h10" stroke="#b89545" stroke-width=".8"/><path d="M.5 15.5V5.5h4.5l1 1.5h7v8.5z" fill="url(#fold2)" stroke="#8a6a1c"/><path d="M1.5 8.5h11" stroke="#b89545" stroke-width=".8"/></svg>
<div class="a" style="left:692px;top:276px;width:2px;height:2px;background:#0a0a6a"></div>
<svg style="left:258px;top:290px" width="10" height="10"><rect x=".5" y=".5" width="8" height="8" fill="#fff" stroke="#8a8a8a"/><path d="M2.5 4.5h4M4.5 2.5v4" stroke="#2f4a9a"/></svg>
<svg style="left:276px;top:286px" width="14" height="17" opacity=".35"><path d="M.5 .5h11v10.5h1.5v5H.5z" fill="#fde38a" stroke="#e6c15a"/><path d="M10.5 11.5h1v4.5" stroke="#d8b64e" fill="none"/></svg>
<svg style="left:492px;top:290px" width="11" height="9"><path d="M1 4.5l3 3L10 1" fill="none" stroke="#8aa98a" stroke-width="2"/></svg>
<div class="a" style="left:692px;top:293px;width:2px;height:2px;background:#9098c8"></div>
<svg style="left:258px;top:307px" width="10" height="10"><rect x=".5" y=".5" width="8" height="8" fill="#fff" stroke="#8a8a8a"/><path d="M2.5 4.5h4M4.5 2.5v4" stroke="#2f4a9a"/></svg>
<svg style="left:276px;top:303px" width="14" height="17"><path d="M.5 .5h11v10.5h1.5v5H.5z" fill="#fde38a" stroke="#e6c15a"/><path d="M10.5 11.5h1v4.5" stroke="#d8b64e" fill="none"/></svg>
<svg style="left:492px;top:307px" width="11" height="9"><path d="M1 4.5l3 3L10 1" fill="none" stroke="#1a6b1a" stroke-width="2"/></svg>
<svg style="left:504px;top:303px" width="18" height="16"><path d="M4.5 4.5V.5h4.5l1 1.5h6.5v9h-12z" fill="#f8ecc0" stroke="#8a6a1c"/><path d="M5.5 3.5h10" stroke="#b89545" stroke-width=".8"/><path d="M.5 15.5V5.5h4.5l1 1.5h7v8.5z" fill="url(#fold2)" stroke="#8a6a1c"/><path d="M1.5 8.5h11" stroke="#b89545" stroke-width=".8"/></svg>
<div class="a" style="left:692px;top:310px;width:2px;height:2px;background:#0a0a6a"></div>
<svg style="left:258px;top:324px" width="10" height="10"><rect x=".5" y=".5" width="8" height="8" fill="#fff" stroke="#8a8a8a"/><path d="M2.5 4.5h4M4.5 2.5v4" stroke="#2f4a9a"/></svg>
<svg style="left:276px;top:320px" width="14" height="17"><path d="M.5 .5h11v10.5h1.5v5H.5z" fill="#fde38a" stroke="#e6c15a"/><path d="M10.5 11.5h1v4.5" stroke="#d8b64e" fill="none"/></svg>
<svg style="left:492px;top:324px" width="11" height="9"><path d="M1 4.5l3 3L10 1" fill="none" stroke="#1a6b1a" stroke-width="2"/></svg>
<svg style="left:504px;top:320px" width="18" height="16"><path d="M4.5 4.5V.5h4.5l1 1.5h6.5v9h-12z" fill="#f8ecc0" stroke="#8a6a1c"/><path d="M5.5 3.5h10" stroke="#b89545" stroke-width=".8"/><path d="M.5 15.5V5.5h4.5l1 1.5h7v8.5z" fill="url(#fold2)" stroke="#8a6a1c"/><path d="M1.5 8.5h11" stroke="#b89545" stroke-width=".8"/></svg>
<div class="a" style="left:692px;top:327px;width:2px;height:2px;background:#0a0a6a"></div>
<svg style="left:258px;top:341px" width="10" height="10"><rect x=".5" y=".5" width="8" height="8" fill="#fff" stroke="#8a8a8a"/><path d="M2.5 4.5h4M4.5 2.5v4" stroke="#2f4a9a"/></svg>
<svg style="left:276px;top:337px" width="14" height="17"><path d="M.5 .5h11v10.5h1.5v5H.5z" fill="#fde38a" stroke="#e6c15a"/><path d="M10.5 11.5h1v4.5" stroke="#d8b64e" fill="none"/></svg>
<svg style="left:492px;top:341px" width="11" height="9"><path d="M1 4.5l3 3L10 1" fill="none" stroke="#1a6b1a" stroke-width="2"/></svg>
<svg style="left:504px;top:337px" width="18" height="16"><path d="M4.5 4.5V.5h4.5l1 1.5h6.5v9h-12z" fill="#f8ecc0" stroke="#8a6a1c"/><path d="M5.5 3.5h10" stroke="#b89545" stroke-width=".8"/><path d="M.5 15.5V5.5h4.5l1 1.5h7v8.5z" fill="url(#fold2)" stroke="#8a6a1c"/><path d="M1.5 8.5h11" stroke="#b89545" stroke-width=".8"/></svg>
<div class="a" style="left:692px;top:344px;width:2px;height:2px;background:#0a0a6a"></div>
<svg style="left:275px;top:355px" width="13" height="15"><path d="M.5 .5h8l3.5 3.5v10.5H.5z" fill="#fff" stroke="#8a8a8a"/><path d="M8.5 .5v3.5h3.5" fill="none" stroke="#8a8a8a"/></svg>
<svg style="left:492px;top:358px" width="11" height="9"><path d="M1 4.5l3 3L10 1" fill="none" stroke="#1a6b1a" stroke-width="2"/></svg>
<svg style="left:687px;top:356px" width="12" height="12"><circle cx="6" cy="6" r="4.9" fill="#67b52f"/></svg>
<svg style="left:275px;top:372px" width="13" height="15"><path d="M.5 .5h8l3.5 3.5v10.5H.5z" fill="#fff" stroke="#8a8a8a"/><path d="M8.5 .5v3.5h3.5" fill="none" stroke="#8a8a8a"/></svg>
<svg style="left:492px;top:375px" width="11" height="9"><path d="M1 4.5l3 3L10 1" fill="none" stroke="#1a6b1a" stroke-width="2"/></svg>
<svg style="left:687px;top:373px" width="12" height="12"><circle cx="6" cy="6" r="4.9" fill="#67b52f"/></svg>
<!-- details bar -->
<div class="a" style="left:255px;top:556px;width:820px;height:1px;background:#c0c0c0"></div>
<div class="a" style="left:255px;top:557px;width:820px;height:24px;background:linear-gradient(#ffffff,#f3f3f3)"></div>

<svg style="left:1054px;top:565px" width="11" height="7"><path d="M1 6l4.5-4.5L10 6" fill="none" stroke="#5a5a5a" stroke-width="1.8"/></svg>
<!-- texts -->
<div class="t" style="left:32px;top:9px;font-size:11px;color:#fff;transform:scaleX(1.019);transform-origin:0 0;-webkit-text-stroke:0">HOME</div>
<div class="t" style="left:130px;top:9px;font-size:11px;color:#fff;transform:scaleX(0.9);transform-origin:0 0;-webkit-text-stroke:0">PLOTS</div>
<div class="t" style="left:226px;top:9px;font-size:11px;color:#fff;transform:scaleX(0.862);transform-origin:0 0;-webkit-text-stroke:0">APPS</div>
<div class="t" style="left:315px;top:9px;font-size:11px;color:#2a2a2a;transform:scaleX(0.866);transform-origin:0 0;-webkit-text-stroke:0">PROJECT</div>
<div class="t" style="left:423px;top:9px;font-size:11px;color:#fff;transform:scaleX(0.91);transform-origin:0 0;-webkit-text-stroke:0">PROJECT SHORTCUTS</div>
<div class="t" style="left:827px;top:8px;font-size:13px;color:#6e6e6e;letter-spacing:-0.56px;-webkit-text-stroke:0">Search Documentation</div>
<div class="t" style="left:1051px;top:8px;font-size:13px;color:#fff;letter-spacing:-0.53px">Sign In</div>
<div class="t" style="left:10px;top:69px;font-size:12px;color:#151515;letter-spacing:0.15px">New</div>
<div class="t" style="left:50px;top:69px;font-size:12px;color:#151515;letter-spacing:-0.4px">Open</div>
<div class="t" style="left:89px;top:69px;font-size:12px;color:#151515;letter-spacing:-0.5px">Share</div>
<div class="t" style="left:164px;top:68px;font-size:12px;color:#151515;letter-spacing:-0.38px">Add Files</div>
<div class="t" style="left:252px;top:68px;font-size:12px;color:#151515;letter-spacing:-0.38px">Dependency</div>
<div class="t" style="left:265px;top:83px;font-size:12px;color:#151515;letter-spacing:-0.7px">Analyzer</div>
<div class="t" style="left:368px;top:68px;font-size:12px;color:#151515;letter-spacing:-0.64px">Search</div>
<div class="t" style="left:474px;top:69px;font-size:12px;color:#151515;letter-spacing:-0.33px">References</div>
<div class="t" style="left:563px;top:37px;font-size:12px;color:#151515;letter-spacing:-0.05px">Details</div>
<div class="t" style="left:564px;top:62px;font-size:12px;color:#151515;letter-spacing:-0.13px">Project Path</div>
<div class="t" style="left:564px;top:85px;font-size:12px;color:#151515;letter-spacing:-0.01px">Startup Shutdown</div>
<div class="t" style="left:686px;top:70px;font-size:12px;color:#151515;letter-spacing:0.05px">Git</div>
<div class="t" style="left:676px;top:86px;font-size:12px;color:#151515;letter-spacing:-0.2px">Details</div>
<div class="t" style="left:722px;top:70px;font-size:12px;color:#151515;letter-spacing:-0.32px">Refresh</div>
<div class="t" style="left:774px;top:70px;font-size:12px;color:#151515;letter-spacing:0.68px">Commit</div>
<div class="t" style="left:849px;top:37px;font-size:12px;color:#151515;letter-spacing:-0.1px">Fetch</div>
<div class="t" style="left:849px;top:61px;font-size:12px;color:#151515;letter-spacing:-0.23px">Push</div>
<div class="t" style="left:849px;top:85px;font-size:12px;color:#151515;letter-spacing:0.43px">Pull</div>
<div class="t" style="left:911px;top:49px;font-size:12px;color:#151515;letter-spacing:-0.18px">Remote</div>
<div class="t" style="left:911px;top:73px;font-size:12px;color:#151515;letter-spacing:-0.3px">Branches</div>
<div class="t" style="left:990px;top:49px;font-size:12px;color:#151515;letter-spacing:0.06px">Submodules</div>
<div class="t" style="left:990px;top:73px;font-size:12px;color:#151515;letter-spacing:-0.65px">Stashes</div>
<div class="t" style="left:52px;top:105px;font-size:11px;color:#6a6a6a;transform:scaleX(0.868);transform-origin:0 0;-webkit-text-stroke:0">FILE</div>
<div class="t" style="left:278px;top:105px;font-size:11px;color:#6a6a6a;transform:scaleX(0.919);transform-origin:0 0;-webkit-text-stroke:0">TOOLS</div>
<div class="t" style="left:525px;top:105px;font-size:11px;color:#6a6a6a;transform:scaleX(0.962);transform-origin:0 0;-webkit-text-stroke:0">ENVIRONMENT</div>
<div class="t" style="left:816px;top:105px;font-size:11px;color:#6a6a6a;transform:scaleX(0.93);transform-origin:0 0;-webkit-text-stroke:0">SOURCE CONTROL</div>
<div class="t" style="left:158px;top:128px;font-size:12px;color:#151515;letter-spacing:-0.1px">C:</div>
<div class="t" style="left:192px;top:127px;font-size:12px;color:#151515;letter-spacing:-0.28px">workSpace</div>
<div class="t" style="left:271px;top:127px;font-size:12px;color:#151515;letter-spacing:-0.19px">examples</div>
<div class="t" style="left:343px;top:127px;font-size:12px;color:#151515;letter-spacing:-0.04px">airframe</div>
<div class="t" style="left:28px;top:151px;font-size:12px;color:#fff;letter-spacing:0.03px">Project - Airframe Example</div>
<div class="t" style="left:28px;top:174px;font-size:12px;color:#151515;letter-spacing:-0.48px">Views</div>
<div class="t" style="left:47px;top:196px;font-size:12px;color:#fff;letter-spacing:-0.32px">Files</div>
<div class="t" style="left:48px;top:218px;font-size:12px;color:#151515;letter-spacing:-0.14px">Dependency Analyzer</div>
<div class="t" style="left:27px;top:402px;font-size:12px;color:#151515;letter-spacing:-0.38px">Labels</div>
<div class="t" style="left:64px;top:424px;font-size:12px;color:#151515;letter-spacing:-0.05px">Classification</div>
<div class="t" style="left:27px;top:499px;font-size:12px;color:#151515;letter-spacing:0.1px">Git</div>
<div class="a" style="left:0;top:516px;width:238px;height:40px;overflow:hidden"><div class="t" style="left:27px;top:-6px;font-size:12px;color:#151515;letter-spacing:-0.09px">Current branch: master</div></div>
<div class="t" style="left:27px;top:526px;font-size:12px;color:#151515;letter-spacing:-0.04px">Branch status: Normal</div>
<div class="t" style="left:27px;top:542px;font-size:12px;color:#151515;letter-spacing:0.1px">No remote tracking branch</div>
<div class="t" style="left:259px;top:174px;font-size:12px;color:#151515;letter-spacing:0.4px">All</div>
<div class="t" style="left:285px;top:174px;font-size:12px;color:#3347d6;letter-spacing:-0.12px;font-weight:bold;-webkit-text-stroke:0">Project (32)</div>
<div class="t" style="left:366px;top:174px;font-size:12px;color:#151515;letter-spacing:0.22px">Modified (1)</div>
<div class="t" style="left:941px;top:174px;font-size:12px;color:#151515;letter-spacing:0.2px">Layout:</div>
<div class="t" style="left:992px;top:174px;font-size:12px;color:#151515;letter-spacing:-0.3px">Tree</div>
<div class="t" style="left:294px;top:200px;font-size:12px;color:#151515;letter-spacing:0.17px">Name</div>
<div class="t" style="left:489px;top:200px;font-size:12px;color:#151515;letter-spacing:-0.34px">Status</div>
<div class="t" style="left:685px;top:200px;font-size:12px;color:#151515;letter-spacing:0.3px">Git</div>
<div class="t" style="left:883px;top:200px;font-size:12px;color:#151515;letter-spacing:-0.02px">Classification</div>
<div class="t" style="left:295px;top:220px;font-size:12px;color:#151515;letter-spacing:-0.26px">custom_tasks</div>
<div class="t" style="left:295px;top:237px;font-size:12px;color:#151515;letter-spacing:-0.43px">data</div>
<div class="t" style="left:294px;top:254px;font-size:12px;color:#151515">lib</div>
<div class="t" style="left:294px;top:271px;font-size:12px;color:#151515;letter-spacing:0.24px">models</div>
<div class="t" style="left:294px;top:288px;font-size:12px;color:#7d7d7d;letter-spacing:0.03px">reports</div>
<div class="t" style="left:295px;top:305px;font-size:12px;color:#151515">src</div>
<div class="t" style="left:295px;top:322px;font-size:12px;color:#151515">tests</div>
<div class="t" style="left:294px;top:339px;font-size:12px;color:#151515;letter-spacing:0.3px">utilities</div>
<div class="t" style="left:294px;top:356px;font-size:12px;color:#151515;letter-spacing:0.18px">.gitattributes</div>
<div class="t" style="left:294px;top:373px;font-size:12px;color:#151515;letter-spacing:0.3px">.gitignore</div>
<div class="t" style="left:259px;top:563px;font-size:12px;color:#151515;letter-spacing:-0.07px">Details</div>
<div class="t" style="left:9px;top:587px;font-size:12px;color:#2a2a2a;letter-spacing:0.18px">Command Window</div>
</body></html>
